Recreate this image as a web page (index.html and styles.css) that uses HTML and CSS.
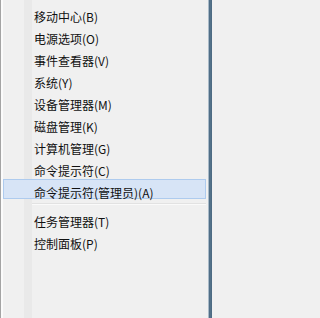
FILE: index.html
```html
<!DOCTYPE html>
<html lang="zh-CN">
<head>
<meta charset="utf-8">
<title>Win+X 菜单</title>
<link rel="stylesheet" href="styles.css">
</head>
<body>
<div class="frame">
  <ul class="menu">
    <li class="item">移动中心(B)</li>
    <li class="item">电源选项(O)</li>
    <li class="item">事件查看器(V)</li>
    <li class="item">系统(Y)</li>
    <li class="item">设备管理器(M)</li>
    <li class="item">磁盘管理(K)</li>
    <li class="item">计算机管理(G)</li>
    <li class="item">命令提示符(C)</li>
    <li class="item active">命令提示符(管理员)(A)</li>
    <li class="sep"></li>
    <li class="item">任务管理器(T)</li>
    <li class="item">控制面板(P)</li>
  </ul>
  <div class="edge"></div>
</div>
</body>
</html>
```

FILE: styles.css
```css
html, body {
  margin: 0;
  padding: 0;
  background: #f0f0f0;
}

.frame {
  display: flex;
  width: 212px;
  height: 318px;
  overflow: hidden;
}

.menu {
  flex: 1;
  display: flex;
  flex-direction: column;
  margin: 0;
  padding: 2px 0 0 0;
  list-style: none;
  background: linear-gradient(to right,
    #a4a4a4 0, #a4a4a4 1px,
    #fbfbfb 1px, #fbfbfb 3px,
    #f0f0f0 3px, #f0f0f0 24px,
    #e9e9e9 24px, #e9e9e9 32px,
    #f0f0f0 32px);
  font-family: "Microsoft YaHei", "Noto Sans CJK SC", "Noto Sans", sans-serif;
  font-size: 12px;
  color: #111;
}

.item {
  flex: none;
  height: 20px;
  margin: 1px 2px 1px 3px;
  padding: 5px 0 0 30px;
  box-sizing: border-box;
  line-height: 15px;
  border: 1px solid transparent;
  white-space: nowrap;
}

.item.active {
  background: #d7e4f6;
  border-color: #aecbee;
}

.sep {
  flex: none;
  height: 7px;
  margin: 0 2px 0 32px;
  background: linear-gradient(to bottom,
    transparent 0, transparent 3px,
    #e2e2e2 3px, #e2e2e2 4px,
    #fafafa 4px, #fafafa 5px,
    transparent 5px);
}

.edge {
  flex: none;
  width: 4px;
  background: linear-gradient(to right,
    #a9bac8 0, #a9bac8 1px,
    #4a6780 1px, #56758c 2px, #4a6780 4px);
}
```
